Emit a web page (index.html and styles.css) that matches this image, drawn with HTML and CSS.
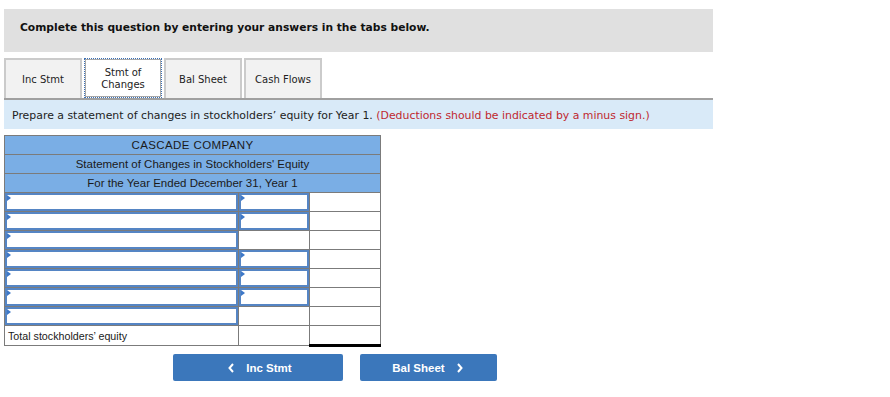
FILE: index.html
```html
<!DOCTYPE html>
<html lang="en">
<head>
    <meta charset="UTF-8">
    <title>Statement of Changes in Stockholders' Equity</title>
    <link rel="stylesheet" href="styles.css">
</head>
<body>
    <div class="page">
        <div class="intro">Complete this question by entering your answers in the tabs below.</div>

        <div class="tabs">
            <div class="tab">Inc Stmt</div>
            <div class="tab active">Stmt of<br>Changes</div>
            <div class="tab">Bal Sheet</div>
            <div class="tab">Cash Flows</div>
        </div>

        <div class="prompt">
            Prepare a statement of changes in stockholders’ equity for Year 1.
            <span class="note">(Deductions should be indicated by a minus sign.)</span>
        </div>

        <table class="sheet">
            <colgroup>
                <col class="c-label">
                <col class="c-amt">
                <col class="c-amt">
            </colgroup>
            <tr class="head"><td colspan="3" class="spaced">CASCADE COMPANY</td></tr>
            <tr class="head"><td colspan="3">Statement of Changes in Stockholders' Equity</td></tr>
            <tr class="head"><td colspan="3">For the Year Ended December 31, Year 1</td></tr>

            <tr>
                <td><div class="inp"></div></td>
                <td><div class="inp"></div></td>
                <td></td>
            </tr>
            <tr>
                <td><div class="inp"></div></td>
                <td><div class="inp"></div></td>
                <td></td>
            </tr>
            <tr>
                <td><div class="inp"></div></td>
                <td class="sum"></td>
                <td></td>
            </tr>
            <tr>
                <td><div class="inp"></div></td>
                <td><div class="inp"></div></td>
                <td></td>
            </tr>
            <tr>
                <td><div class="inp"></div></td>
                <td><div class="inp"></div></td>
                <td></td>
            </tr>
            <tr>
                <td><div class="inp"></div></td>
                <td><div class="inp"></div></td>
                <td></td>
            </tr>
            <tr>
                <td><div class="inp"></div></td>
                <td class="sum"></td>
                <td></td>
            </tr>
            <tr>
                <td class="label">Total stockholders’ equity</td>
                <td></td>
                <td class="total"></td>
            </tr>
        </table>

        <div class="nav">
            <button class="nav-btn prev">
                <svg class="chev" viewBox="0 0 6 10"><polyline points="5,1 1.5,5 5,9" /></svg>
                Inc Stmt
            </button>
            <button class="nav-btn next">
                Bal Sheet
                <svg class="chev" viewBox="0 0 6 10"><polyline points="1,1 4.5,5 1,9" /></svg>
            </button>
        </div>
    </div>
</body>
</html>
```

FILE: styles.css
```css
body {
    margin: 0;
    background-color: #fff;
    font-family: 'DejaVu Sans', Verdana, sans-serif;
    color: #111;
}
.page {
    padding: 9px 0 0 4px;
}
.intro {
    width: 709px;
    height: 43px;
    box-sizing: border-box;
    padding: 12px 0 0 16px;
    background-color: #e0e0e0;
    font-size: 10.7px;
    font-weight: bold;
}
.tabs {
    display: flex;
    gap: 2px;
    margin-top: 6px;
    width: 709px;
    border-bottom: 2px solid #a0a0a0;
}
.tab {
    width: 78px;
    height: 40px;
    box-sizing: border-box;
    display: flex;
    align-items: center;
    justify-content: center;
    text-align: center;
    padding-top: 2px;
    background-color: #f2f2f2;
    border: 2px solid #cbcbcb;
    border-bottom: none;
    font-size: 10px;
    line-height: 12px;
    color: #222;
}
.tab.active {
    background-color: #fff;
    border: 1px dotted #3a6fb5;
    outline: 1px solid #a8a8a8;
    outline-offset: -2px;
}
.prompt {
    width: 709px;
    height: 29px;
    box-sizing: border-box;
    padding: 9px 0 0 8px;
    background-color: #d9eaf8;
    font-size: 10.9px;
    color: #222;
}
.note {
    color: #c0282f;
}
.sheet {
    margin-top: 6px;
    border-collapse: collapse;
    font-family: 'Liberation Sans', Arial, sans-serif;
    font-size: 11.5px;
    color: #1a1a1a;
}
.c-label {
    width: 234px;
}
.c-amt {
    width: 71px;
}
.sheet td {
    border: 1px solid #7b7b7b;
    height: 18px;
    padding: 0;
}
.sheet .head td {
    background-color: #7aaee5;
    text-align: center;
    line-height: 14px;
}
.spaced {
    letter-spacing: 0.4px;
}
.inp {
    position: relative;
    height: 18px;
    box-sizing: border-box;
    border: 2px solid #5585c4;
}
.inp::before {
    content: '';
    position: absolute;
    top: 0;
    left: 0;
    border-top: 3px solid transparent;
    border-bottom: 3px solid transparent;
    border-left: 4px solid #3d78c8;
}
.sheet td.sum {
    border-top: 1px solid #000;
}
.sheet td.total {
    border-top: 1px solid #000;
    border-bottom: 3px solid #000;
}
.sheet td.label {
    padding-left: 3px;
    font-size: 10.7px;
}
.nav {
    display: flex;
    gap: 17px;
    margin: 7px 0 0 169px;
}
.nav-btn {
    display: flex;
    align-items: center;
    justify-content: center;
    gap: 12px;
    height: 27px;
    border: none;
    border-radius: 2px;
    background-color: #3b77bb;
    color: #fff;
    font-family: 'Liberation Sans', Arial, sans-serif;
    font-size: 11.5px;
    font-weight: bold;
    cursor: pointer;
}
.prev {
    width: 170px;
    padding-left: 10px;
}
.next {
    width: 137px;
    padding-left: 4px;
}
.chev {
    width: 6px;
    height: 10px;
    fill: none;
    stroke: #fff;
    stroke-width: 2;
}
```
